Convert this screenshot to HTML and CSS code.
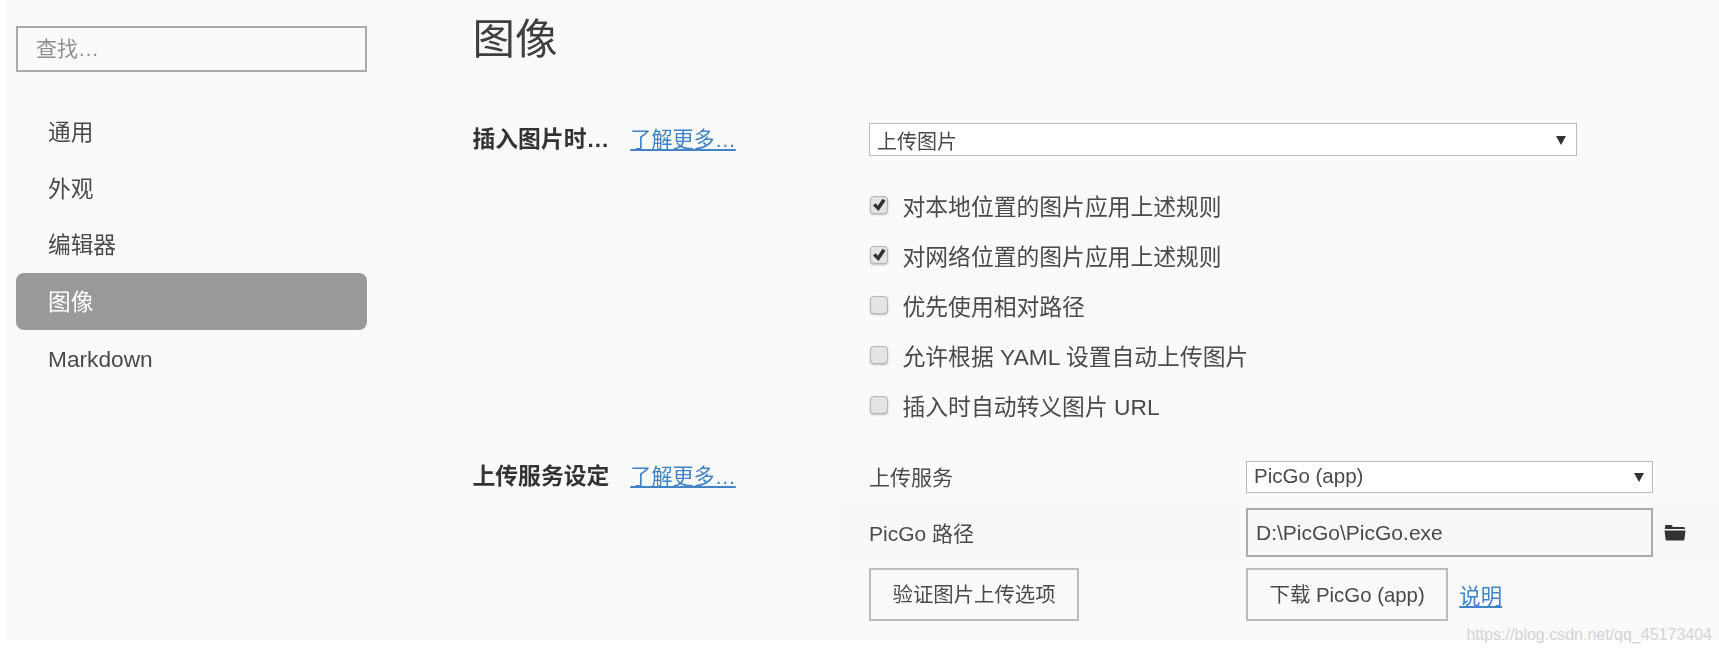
FILE: index.html
```html
<!DOCTYPE html>
<html lang="zh-CN">
<head>
<meta charset="utf-8">
<title>图像</title>
<link rel="stylesheet" href="styles.css">
</head>
<body>
<div class="panel">
  <aside class="sidebar">
    <div class="search">查找…</div>
    <nav class="nav">
      <div class="nav-item">通用</div>
      <div class="nav-item">外观</div>
      <div class="nav-item">编辑器</div>
      <div class="nav-item active">图像</div>
      <div class="nav-item">Markdown</div>
    </nav>
  </aside>
  <main class="main">
    <h1 class="title">图像</h1>
    <section class="section first">
      <div class="label"><b>插入图片时…</b><a class="link" href="#">了解更多…</a></div>
      <div class="content">
        <div class="select wide"><span>上传图片</span><svg class="caret" viewBox="0 0 10 10"><path d="M0 1h10L5 10z"/></svg></div>
        <ul class="checks">
          <li><span class="box"><svg viewBox="0 0 16 16"><path d="M2 8.500L4.800 6.200 6.800 8.800 11.500 1.800 14.500 3.800 7.500 14z"/></svg></span>对本地位置的图片应用上述规则</li>
          <li><span class="box"><svg viewBox="0 0 16 16"><path d="M2 8.500L4.800 6.200 6.800 8.800 11.500 1.800 14.500 3.800 7.500 14z"/></svg></span>对网络位置的图片应用上述规则</li>
          <li><span class="box"></span>优先使用相对路径</li>
          <li><span class="box"></span>允许根据 YAML 设置自动上传图片</li>
          <li><span class="box"></span>插入时自动转义图片 URL</li>
        </ul>
      </div>
    </section>
    <section class="section second">
      <div class="label"><b>上传服务设定</b><a class="link" href="#">了解更多…</a></div>
      <div class="content">
        <div class="row r1"><span class="key">上传服务</span><div class="select narrow"><span>PicGo (app)</span><svg class="caret" viewBox="0 0 10 10"><path d="M0 1h10L5 10z"/></svg></div></div>
        <div class="row r2"><span class="key">PicGo 路径</span><div class="path">D:\PicGo\PicGo.exe</div><svg class="folder" viewBox="0 0 22 17"><path d="M1 4V2.500C1 1.500 1.600 1 2.500 1h4.300c.9 0 1.400.5 1.600 1.300l.2.7h10.900c.9 0 1.500.6 1.500 1.500V5H1zM.5 6.500h21L20.500 15c-.1 1-.8 1.500-1.700 1.500H3.200c-.9 0-1.600-.5-1.700-1.500z"/></svg></div>
        <div class="row r3"><span class="key"><span class="btn">验证图片上传选项</span></span><span class="btn">下载 PicGo (app)</span><a class="link small" href="#">说明</a></div>
      </div>
    </section>
  </main>
</div>
<div class="watermark">https://blog.csdn.net/qq_45173404</div>
</body>
</html>
```
FILE: styles.css
```css
* { box-sizing: border-box; }
html, body { margin: 0; height: 100%; overflow: hidden; background: #fff; }
body {
  position: relative;
  font-family: "Liberation Sans", "Noto Sans CJK SC", sans-serif;
  color: #4a4a4a;
  font-size: 21px;
}
.panel {
  display: flex;
  margin-left: 7px;
  height: 640px;
  background: #fafafa;
  filter: blur(.4px);
}
.sidebar { width: 465.500px; padding: 26px 0 0 9px; flex: none; }
.search {
  width: 351px;
  height: 46px;
  border: 2px solid #aaa;
  padding-left: 18px;
  line-height: 42px;
  font-size: 21px;
  color: #8f8f8f;
}
.nav { margin-top: 31px; width: 351px; }
.nav-item {
  height: 56.700px;
  line-height: 58px;
  padding-left: 32px;
  font-size: 22.700px;
  border-radius: 8px;
}
.nav-item.active { background: #999; color: #fff; }
.main { flex: 1; min-width: 0; }
.title {
  margin: 0;
  padding-top: 10.500px;
  font-size: 42.500px;
  line-height: 58px;
  font-weight: 400;
  color: #3f3f3f;
}
.section { display: flex; }
.section.first { margin-top: 54.500px; }
.section.second { margin-top: 30px; }
.label { width: 396.500px; flex: none; line-height: 32px; font-size: 22.800px; color: #333; }
.first .label { line-height: 33px; }
.label b { font-weight: 700; }
.link { color: #4183c4; margin-left: 21px; text-decoration: underline; font-size: 21.100px; }
.link.small { margin-left: 11px; font-size: 21.400px; }
.content { flex: 1; min-width: 0; }
.select {
  display: flex;
  align-items: center;
  justify-content: space-between;
  background: #fff;
  border: 1px solid #bbb;
  line-height: 1;
}
.select.wide { width: 708px; height: 33px; padding: 0 10px 0 7px; font-size: 20px; }
.select.wide span { position: relative; top: 2px; }
.select.narrow { width: 407px; height: 32px; padding: 0 8px 0 7px; font-size: 20.500px; }
.caret { width: 10px; height: 10px; fill: #333; }
.checks { list-style: none; margin: 24px 0 0; padding: 0; }
.checks li { display: flex; align-items: center; height: 50px; font-size: 22.800px; }
.box {
  width: 18px;
  height: 18px;
  margin: 0 15px 0 0.500px;
  flex: none;
  background: #e4e4e4;
  border: 1px solid #b5b5b5;
  border-radius: 4px;
  box-shadow: 0 1px 2px rgba(0,0,0,.25);
}
.box svg { display: block; width: 16px; height: 16px; fill: #333; }
.section.second .content { margin-left: -29px; margin-top: -7px; }
.row { display: flex; align-items: center; padding-left: 29px; font-size: 21px; }
.key { width: 377px; flex: none; }
.r1 .key, .r2 .key { padding-bottom: 2px; }
.r1 { height: 50.500px; padding-bottom: 3.500px; }
.r2 { height: 58px; background: #f8f8f8; }
.r3 { height: 66px; }
.path {
  width: 407px;
  height: 49px;
  border: 2px solid #aaa;
  background: #f8f8f8;
  padding-left: 8px;
  line-height: 46px;
}
.folder { width: 22px; height: 17px; margin-left: 11px; fill: #333; }
.btn {
  display: inline-block;
  height: 53px;
  border: 2px solid #bbb;
  padding: 0 21.500px;
  line-height: 51px;
  font-size: 20.400px;
}
.watermark {
  position: absolute;
  right: 7px;
  top: 623px;
  font-size: 16px;
  line-height: 24px;
  color: #d4d4d4;
}
```
